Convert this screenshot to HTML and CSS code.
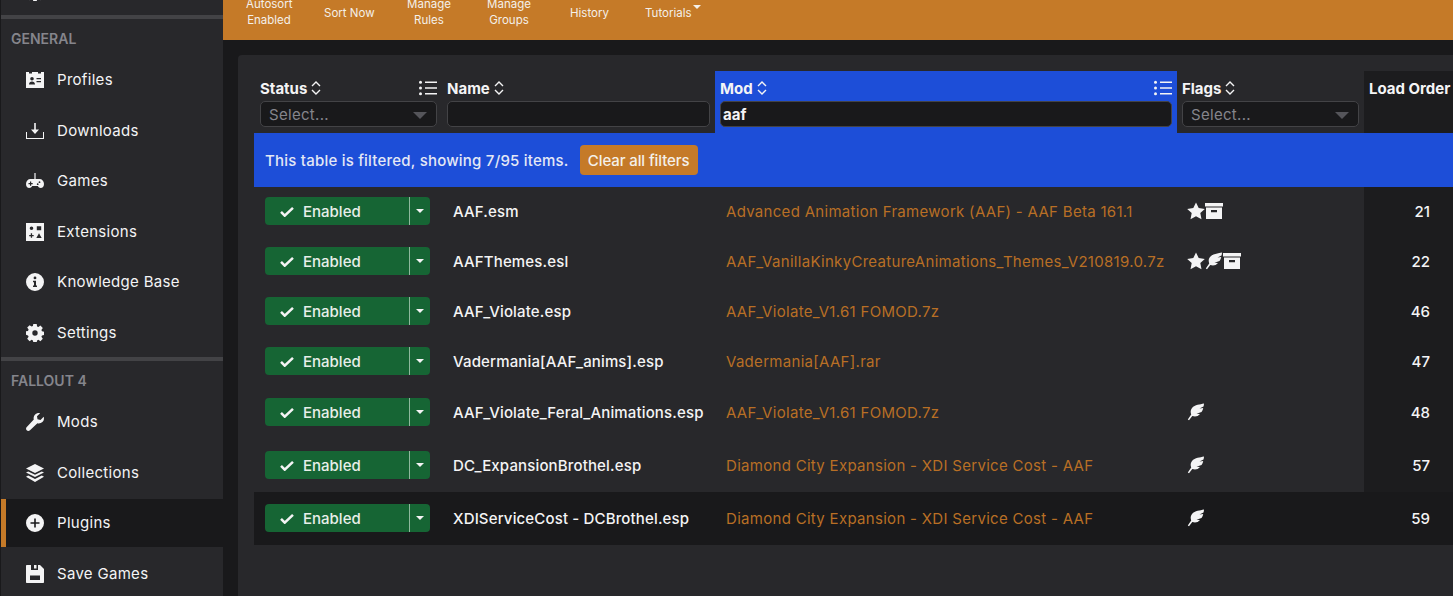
FILE: index.html
```html
<!doctype html>
<html lang="en">
<head>
    <meta charset="UTF-8">
    <meta name="viewport" content="width=device-width, initial-scale=1.0">
    <title>Plugins</title>
    <link rel="stylesheet" href="styles.css">
</head>
<body>
    <svg class="sprite" xmlns="http://www.w3.org/2000/svg">
        <symbol id="i-profiles" viewBox="0 0 18 16"><path fill-rule="evenodd" d="M0 0h3v1.500h3V0h6v1.500h3V0h3v16H0zM6 5a1.800 1.800 0 1 0 0 3.600A1.800 1.800 0 0 0 6 5zM3 12.500c0-2 1.300-3 3-3s3 1 3 3zM10.500 6v1.300H15V6zM10.500 9v1.300H15V9z"/></symbol>
        <symbol id="i-downloads" viewBox="0 0 18 16"><path d="M8.200 0h1.600v6.500h3.200L9 11 5 6.500h3.200z"/><path d="M0 9h1v6h16V9h1v7H0z"/></symbol>
        <symbol id="i-games" viewBox="0 0 18 16"><path fill-rule="evenodd" d="M8.400 0h1.200v6h3.900C16 6 18 8 18 11c0 2.500-1.500 4-3.200 4-1.500 0-2.300-1-3-2H6.200c-.7 1-1.500 2-3 2C1.500 15 0 13.500 0 11c0-3 2-5 4.500-5h3.900zM4 8.500V10H2.500v1.200H4v1.500h1.200v-1.500h1.500V10H5.200V8.500zM13.500 8.300a.9.900 0 1 0 0 1.800.9.900 0 0 0 0-1.800zM11.700 10.300a.9.900 0 1 0 0 1.800.9.900 0 0 0 0-1.800z"/></symbol>
        <symbol id="i-extensions" viewBox="0 0 18 18"><path fill-rule="evenodd" d="M0 0h18v18H0zM5.500 3.500a1.800 1.800 0 1 0 0 3.600 1.800 1.800 0 0 0 0-3.600zM10.800 3.300v4h4.400v-4zM4.800 10.300v1.600H3.200v1.300h1.600v1.600h1.300v-1.600h1.600v-1.300H6.100v-1.600zM13 10.200l-2.700 4.700h5.400z"/></symbol>
        <symbol id="i-info" viewBox="0 0 18 18"><path fill-rule="evenodd" d="M9 0a9 9 0 1 1 0 18A9 9 0 0 1 9 0zM9 3.500a1.400 1.400 0 1 0 0 2.800 1.400 1.400 0 0 0 0-2.800zM7 7.800v1.400h1v3.400H7V14h4v-1.400h-1V7.800z"/></symbol>
        <symbol id="i-gear" viewBox="0 0 18 18"><path fill-rule="evenodd" d="M7.300 0h3.400l.4 2.400 1.300.6 2-1.400 2.400 2.400-1.400 2 .6 1.300 2 .4v3.400l-2 .4-.6 1.300 1.400 2-2.400 2.400-2-1.400-1.300.6-.4 2H7.300l-.4-2-1.300-.6-2 1.400-2.400-2.400 1.400-2-.6-1.300L0 10.700V7.300l2-.4.600-1.300-1.400-2 2.400-2.400 2 1.400 1.300-.6zM9 6.300a2.700 2.700 0 1 0 0 5.400 2.700 2.700 0 0 0 0-5.400z"/></symbol>
        <symbol id="i-wrench" viewBox="0 0 18 18"><path fill-rule="evenodd" d="M17.700 3.800c.6 2 .1 4-1.300 5.300-1.400 1.300-3.300 1.700-5 1.200L4 17.200c-1 1-2.400 1-3.300.1-.9-1-.9-2.400.1-3.300l7-7.400C7.300 4.800 7.800 2.800 9.200 1.500 10.500.2 12.400-.3 14.100.2L11 3.300l.5 3 3 .6z"/></symbol>
        <symbol id="i-layers" viewBox="0 0 18 18"><path d="M9 0l9 4.500L9 9 0 4.500z"/><path d="M2.200 7.400L9 10.800l6.800-3.400L18 8.600 9 13 0 8.600z"/><path d="M2.200 11.600L9 15l6.800-3.400L18 12.800 9 18 0 12.800z"/></symbol>
        <symbol id="i-plus" viewBox="0 0 18 18"><path fill-rule="evenodd" d="M9 0a9 9 0 1 1 0 18A9 9 0 0 1 9 0zM8.200 4.500v3.700H4.500v1.600h3.700v3.700h1.600V9.800h3.700V8.200H9.800V4.500z"/></symbol>
        <symbol id="i-save" viewBox="0 0 18 18"><path fill-rule="evenodd" d="M0 1C0 .4.400 0 1 0h4v5h7V0h2l4 4v13c0 .6-.4 1-1 1H1c-.6 0-1-.4-1-1zM4 10.500V15h10v-4.500z"/><path d="M8 0h2.500v3.500H8z"/></symbol>
        <symbol id="i-sort" viewBox="0 0 10 16"><path d="M1 6l4-4 4 4M1 10l4 4 4-4" fill="none" stroke="currentColor" stroke-width="1.400"/></symbol>
        <symbol id="i-list" viewBox="0 0 18 16"><path d="M6 1.500h12v1.600H6zM6 7.200h12v1.600H6zM6 12.900h12v1.600H6z"/><circle cx="1.500" cy="2.300" r="1.500"/><circle cx="1.500" cy="8" r="1.500"/><circle cx="1.500" cy="13.700" r="1.500"/></symbol>
        <symbol id="i-check" viewBox="0 0 15 12"><path d="M1 6.500l4 4L14 2" fill="none" stroke="currentColor" stroke-width="2.800"/></symbol>
        <symbol id="i-star" viewBox="0 0 18 18"><path d="M9 .5l2.700 5.600 6.100.8-4.500 4.200 1.200 6.100L9 14.200l-5.500 3 1.200-6.100L.2 6.900l6.100-.8z"/></symbol>
        <symbol id="i-feather" viewBox="0 0 18 18"><path d="M17 .5C13 1.500 8 1.500 5 5 3.200 7.200 3.600 9.500 4.200 11.500L.8 16.500l1.200.8L5.300 13c2.700 1 5.700.5 7.700-2l-3.500-.3 5-1.700c1-1.500 1.500-2.800 1.700-4l-3.700.5 4-2c.3-1 .5-2 .5-3z"/></symbol>
        <symbol id="i-box" viewBox="0 0 18 16"><path fill-rule="evenodd" d="M0 0h18v3.500H0zM1 4.500h16V16H1zM6 7v2.200h6V7z"/></symbol>
    </svg>

    <nav class="sidebar">
        <div class="sidebar-cut"><svg class="icon"><use href="#i-gear"/></svg></div>
        <section class="nav-section">
            <h2 class="nav-title">GENERAL</h2>
            <a class="nav-item"><svg class="icon"><use href="#i-profiles"/></svg>Profiles</a>
            <a class="nav-item"><svg class="icon"><use href="#i-downloads"/></svg>Downloads</a>
            <a class="nav-item"><svg class="icon"><use href="#i-games"/></svg>Games</a>
            <a class="nav-item"><svg class="icon"><use href="#i-extensions"/></svg>Extensions</a>
            <a class="nav-item"><svg class="icon"><use href="#i-info"/></svg>Knowledge Base</a>
            <a class="nav-item"><svg class="icon"><use href="#i-gear"/></svg>Settings</a>
        </section>
        <section class="nav-section">
            <h2 class="nav-title">FALLOUT 4</h2>
            <a class="nav-item"><svg class="icon"><use href="#i-wrench"/></svg>Mods</a>
            <a class="nav-item"><svg class="icon"><use href="#i-layers"/></svg>Collections</a>
            <a class="nav-item active"><svg class="icon"><use href="#i-plus"/></svg>Plugins</a>
            <a class="nav-item"><svg class="icon"><use href="#i-save"/></svg>Save Games</a>
        </section>
    </nav>

    <main class="main">
        <div class="toolbar">
            <span class="tool tool-autosort">Autosort<br>Enabled</span>
            <span class="tool tool-single tool-sort">Sort Now</span>
            <span class="tool tool-rules">Manage<br>Rules</span>
            <span class="tool tool-groups">Manage<br>Groups</span>
            <span class="tool tool-single tool-history">History</span>
            <span class="tool tool-single tool-tutorials">Tutorials<i class="tool-caret"></i></span>
        </div>

        <div class="panel">
            <div class="grid header-row">
                <div class="head head-status">
                    <div class="head-title">Status <svg class="sort"><use href="#i-sort"/></svg><svg class="list"><use href="#i-list"/></svg></div>
                    <div class="select">Select...<i class="select-caret"></i></div>
                </div>
                <div class="head">
                    <div class="head-title">Name <svg class="sort"><use href="#i-sort"/></svg></div>
                    <div class="select"></div>
                </div>
                <div class="head head-mod">
                    <div class="head-title">Mod <svg class="sort"><use href="#i-sort"/></svg><svg class="list"><use href="#i-list"/></svg></div>
                    <div class="select select-value">aaf</div>
                </div>
                <div class="head head-flags">
                    <div class="head-title">Flags <svg class="sort"><use href="#i-sort"/></svg></div>
                    <div class="select">Select...<i class="select-caret"></i></div>
                </div>
                <div class="head head-order">
                    <div class="head-title">Load Order</div>
                </div>
            </div>

            <div class="banner">
                <span>This table is filtered, showing 7/95 items.</span>
                <button class="clear-btn">Clear all filters</button>
            </div>

            <div class="grid row">
                <div class="cell"><div class="status"><span class="status-main"><svg class="check"><use href="#i-check"/></svg>Enabled</span><span class="status-drop"><i></i></span></div></div>
                <div class="cell cell-name">AAF.esm</div>
                <div class="cell cell-mod">Advanced Animation Framework (AAF) - AAF Beta 161.1</div>
                <div class="cell cell-flags"><svg class="flag"><use href="#i-star"/></svg><svg class="flag"><use href="#i-box"/></svg></div>
                <div class="cell cell-order">21</div>
            </div>
            <div class="grid row">
                <div class="cell"><div class="status"><span class="status-main"><svg class="check"><use href="#i-check"/></svg>Enabled</span><span class="status-drop"><i></i></span></div></div>
                <div class="cell cell-name">AAFThemes.esl</div>
                <div class="cell cell-mod">AAF_VanillaKinkyCreatureAnimations_Themes_V210819.0.7z</div>
                <div class="cell cell-flags"><svg class="flag"><use href="#i-star"/></svg><svg class="flag"><use href="#i-feather"/></svg><svg class="flag"><use href="#i-box"/></svg></div>
                <div class="cell cell-order">22</div>
            </div>
            <div class="grid row">
                <div class="cell"><div class="status"><span class="status-main"><svg class="check"><use href="#i-check"/></svg>Enabled</span><span class="status-drop"><i></i></span></div></div>
                <div class="cell cell-name">AAF_Violate.esp</div>
                <div class="cell cell-mod">AAF_Violate_V1.61 FOMOD.7z</div>
                <div class="cell cell-flags"></div>
                <div class="cell cell-order">46</div>
            </div>
            <div class="grid row">
                <div class="cell"><div class="status"><span class="status-main"><svg class="check"><use href="#i-check"/></svg>Enabled</span><span class="status-drop"><i></i></span></div></div>
                <div class="cell cell-name">Vadermania[AAF_anims].esp</div>
                <div class="cell cell-mod">Vadermania[AAF].rar</div>
                <div class="cell cell-flags"></div>
                <div class="cell cell-order">47</div>
            </div>
            <div class="grid row row-mid">
                <div class="cell"><div class="status"><span class="status-main"><svg class="check"><use href="#i-check"/></svg>Enabled</span><span class="status-drop"><i></i></span></div></div>
                <div class="cell cell-name">AAF_Violate_Feral_Animations.esp</div>
                <div class="cell cell-mod">AAF_Violate_V1.61 FOMOD.7z</div>
                <div class="cell cell-flags"><svg class="flag"><use href="#i-feather"/></svg></div>
                <div class="cell cell-order">48</div>
            </div>
            <div class="grid row row-tall">
                <div class="cell"><div class="status"><span class="status-main"><svg class="check"><use href="#i-check"/></svg>Enabled</span><span class="status-drop"><i></i></span></div></div>
                <div class="cell cell-name">DC_ExpansionBrothel.esp</div>
                <div class="cell cell-mod">Diamond City Expansion - XDI Service Cost - AAF</div>
                <div class="cell cell-flags"><svg class="flag"><use href="#i-feather"/></svg></div>
                <div class="cell cell-order">57</div>
            </div>
            <div class="grid row row-tall row-selected">
                <div class="cell"><div class="status"><span class="status-main"><svg class="check"><use href="#i-check"/></svg>Enabled</span><span class="status-drop"><i></i></span></div></div>
                <div class="cell cell-name">XDIServiceCost - DCBrothel.esp</div>
                <div class="cell cell-mod">Diamond City Expansion - XDI Service Cost - AAF</div>
                <div class="cell cell-flags"><svg class="flag"><use href="#i-feather"/></svg></div>
                <div class="cell cell-order">59</div>
            </div>
        </div>
    </main>
</body>
</html>
```

FILE: styles.css
```css
* {
    box-sizing: border-box;
}
html, body {
    height: 100%;
}
body {
    margin: 0;
    display: flex;
    overflow: hidden;
    font-family: Inter, "Liberation Sans", sans-serif;
    background-color: #19191b;
    color: #f4f4f5;
}
.sprite {
    display: none;
}

/* sidebar */
.sidebar {
    width: 223px;
    flex-shrink: 0;
    height: 100%;
    overflow: hidden;
    background-color: #28282b;
    border-left: 1px solid #19191b;
}
.sidebar-cut {
    height: 15px;
    padding-left: 25px;
    overflow: hidden;
}
.sidebar-cut .icon {
    display: block;
    margin-top: -17px;
}
.nav-section {
    border-top: 4px solid #434346;
}
.nav-title {
    margin: 12px 0 9px 10px;
    font-size: 14px;
    line-height: 16px;
    font-weight: 600;
    color: #85858c;
}
.nav-item {
    height: 48px;
    margin-bottom: 2.6px;
    padding-left: 20px;
    display: flex;
    align-items: center;
    gap: 13px;
    border-left: 5px solid transparent;
    font-size: 15px;
    line-height: 18px;
    letter-spacing: 0.3px;
    color: #f4f4f5;
}
.nav-item:last-child {
    margin-bottom: 0;
}
.nav-item.active {
    background-color: #19191b;
    border-left-color: #c57a28;
}
.icon {
    width: 18px;
    height: 18px;
    flex-shrink: 0;
    fill: #f4f4f5;
}

/* toolbar */
.main {
    flex: 1;
    min-width: 0;
    overflow: hidden;
}
.toolbar {
    height: 40px;
    padding-bottom: 16px;
    display: flex;
    align-items: center;
    background-color: #c57a28;
    font-size: 11.5px;
    line-height: 16.5px;
    text-align: center;
    color: #f4f0ea;
}
.tool {
    flex-shrink: 0;
    white-space: nowrap;
}
.tool-single {
    margin-top: 2px;
}
.tool-autosort { margin-left: 23px; width: 46px; }
.tool-sort { margin-left: 32px; width: 50px; }
.tool-rules { margin-left: 33px; width: 44px; }
.tool-groups { margin-left: 36px; width: 44px; }
.tool-history { margin-left: 39px; width: 38px; }
.tool-tutorials { margin-left: 37px; position: relative; }
.tool-caret {
    position: absolute;
    top: 0;
    right: -9px;
    border: 4px solid transparent;
    border-top-color: #f4f0ea;
    border-bottom: 0;
}

/* table */
.panel {
    margin: 15px 0 0 15px;
    min-height: 600px;
    padding: 16px 0 0 16px;
    background-color: #28282b;
    border-radius: 4px 0 0 0;
}
.grid {
    display: grid;
    grid-template-columns: 188px 273px 462px 187px 90px;
}
.header-row {
    height: 62px;
}
.head {
    padding: 0 5px;
    min-width: 0;
}
.head-status {
    padding-left: 6px;
}
.head-mod {
    background-color: #1d4ed8;
}
.head-order {
    background-color: #1c1c1e;
}
.head-title {
    height: 30px;
    padding-top: 4px;
    display: flex;
    align-items: center;
    font-size: 15px;
    font-weight: 700;
    color: #f4f4f5;
    white-space: nowrap;
}
.sort {
    width: 10px;
    height: 16px;
    margin-left: 4px;
    color: #f4f4f5;
}
.list {
    width: 18px;
    height: 16px;
    margin-left: auto;
    fill: #f4f4f5;
}
.select {
    height: 26px;
    padding: 0 8px;
    display: flex;
    align-items: center;
    justify-content: space-between;
    background-color: #19191b;
    border: 1px solid #434346;
    border-radius: 5px;
    font-size: 15px;
    letter-spacing: 0.3px;
    color: #85858c;
}
.select-value {
    padding: 0 2px;
    font-weight: 700;
    letter-spacing: 0;
    color: #f4f4f5;
}
.select-caret {
    margin-right: 1px;
    margin-top: 3px;
    border: 7px solid transparent;
    border-top-color: #55555a;
    border-bottom: 0;
}
.banner {
    height: 54px;
    padding-left: 11px;
    display: flex;
    align-items: center;
    gap: 11px;
    background-color: #1d4ed8;
    font-size: 15px;
    letter-spacing: 0.22px;
    font-weight: 500;
    color: #e4e8f5;
}
.clear-btn {
    height: 30px;
    width: 118px;
    padding: 0;
    border: none;
    border-radius: 4px;
    background-color: #c57a28;
    font-family: inherit;
    font-size: 15px;
    font-weight: 500;
    letter-spacing: -0.1px;
    color: #f4f0ea;
}
.row {
    height: 50px;
    font-size: 15px;
}
.row-mid {
    height: 52px;
}
.row-tall {
    height: 53px;
}
.row-selected {
    background-color: #19191b;
}
.cell {
    display: flex;
    align-items: center;
    padding: 0 0 2px 11px;
    white-space: nowrap;
    min-width: 0;
}
.row-mid .cell {
    padding-bottom: 2px;
}
.row-tall .cell {
    padding-bottom: 1px;
}
.cell-name {
    font-weight: 500;
    letter-spacing: 0.15px;
    color: #f4f4f5;
}
.cell-mod {
    letter-spacing: 0.3px;
    color: #b86f25;
}
.cell-flags {
    padding-left: 10px;
}
.flag {
    width: 18px;
    height: 18px;
    fill: #f4f4f5;
}
.cell-order {
    justify-content: flex-end;
    padding-right: 24px;
    background-color: #1c1c1e;
    font-weight: 500;
    color: #f4f4f5;
}
.row-selected .cell-order {
    background-color: #19191b;
}
.status {
    width: 165px;
    height: 28px;
    display: flex;
    background-color: #166534;
    border-radius: 4px;
    font-size: 15px;
    font-weight: 500;
    color: #e8efe9;
}
.status-main {
    flex: 1;
    padding-left: 15px;
    display: flex;
    align-items: center;
    gap: 9px;
}
.check {
    width: 14px;
    height: 11px;
    color: #f4f4f5;
}
.status-drop {
    width: 21px;
    display: flex;
    align-items: center;
    justify-content: center;
    border-left: 1px solid #8fb89d;
}
.status-drop i {
    border: 4px solid transparent;
    border-top-color: #f4f4f5;
    border-bottom: 0;
}
```
